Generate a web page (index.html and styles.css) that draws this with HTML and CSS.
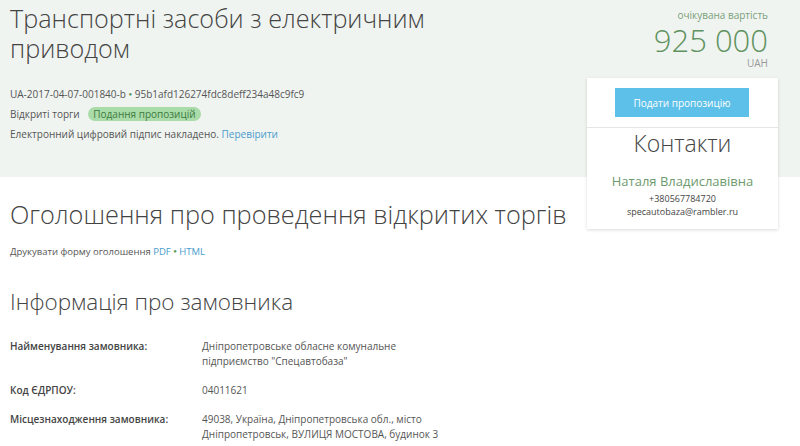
FILE: index.html
```html
<!DOCTYPE html>
<html lang="uk">
<head>
    <meta charset="UTF-8">
    <meta name="viewport" content="width=device-width, initial-scale=1.0">
    <title>Транспортні засоби з електричним приводом</title>
    <link rel="stylesheet" href="styles.css">
</head>
<body>
    <div class="hero">
        <div class="hero-main">
            <h1 class="tender-title">Транспортні засоби з електричним приводом</h1>
            <div class="tender-meta">
                <div class="meta-line">UA-2017-04-07-001840-b <span class="dot">●</span> 95b1afd126274fdc8deff234a48c9fc9</div>
                <div class="meta-line">Відкриті торги <span class="status">Подання пропозицій</span></div>
                <div class="meta-line">Електронний цифровий підпис накладено. <a href="#">Перевірити</a></div>
            </div>
        </div>
        <div class="hero-side">
            <div class="price">
                <div class="price-label">очікувана вартість</div>
                <div class="price-value">925 000</div>
                <div class="price-currency">UAH</div>
            </div>
            <div class="contact-card">
                <div class="card-action">
                    <button class="bid-button">Подати пропозицію</button>
                </div>
                <div class="card-contacts">
                    <div class="contacts-title">Контакти</div>
                    <div class="contact-name">Наталя Владиславівна</div>
                    <div class="contact-line contact-phone">+380567784720</div>
                    <div class="contact-line">specautobaza@rambler.ru</div>
                </div>
            </div>
        </div>
    </div>

    <div class="content">
        <h2 class="section-title">Оголошення про проведення відкритих торгів</h2>
        <div class="print-line">Друкувати форму оголошення <a href="#">PDF</a> <span class="dot">●</span> <a href="#">HTML</a></div>

        <h3 class="block-title">Інформація про замовника</h3>
        <div class="info-table">
            <div class="info-label">Найменування замовника:</div>
            <div class="info-value">Дніпропетровське обласне комунальне<br>підприємство "Спецавтобаза"</div>
            <div class="info-label">Код ЄДРПОУ:</div>
            <div class="info-value">04011621</div>
            <div class="info-label">Місцезнаходження замовника:</div>
            <div class="info-value">49038, Україна, Дніпропетровська обл., місто<br>Дніпропетровськ, ВУЛИЦЯ МОСТОВА, будинок 3</div>
        </div>
    </div>
</body>
</html>
```

FILE: styles.css
```css
body {
    font-family: "Open Sans", "Liberation Sans", sans-serif;
    margin: 0;
    padding: 0;
    color: #555;
    background: #fff;
    overflow: hidden;
}

a {
    color: #4a9ccc;
    text-decoration: none;
}

.dot {
    color: #5a9a5a;
    font-size: 6px;
    vertical-align: 2px;
}

.hero {
    display: flex;
    height: 177px;
    padding: 0 22px 0 10px;
    background: #f0f4f1;
}

.hero-main {
    flex: 1;
}

.tender-title {
    margin: 0;
    padding-top: 3px;
    max-width: 540px;
    font-size: 25.2px;
    font-weight: 300;
    line-height: 30px;
    color: #444;
}

.tender-meta {
    margin-top: 21px;
    font-size: 10px;
    line-height: 20px;
    color: #555;
}

.status {
    display: inline-block;
    margin-left: 6px;
    padding: 0 5px;
    line-height: 14px;
    border-radius: 8px;
    background: #a9dca9;
    color: #3d7a3d;
}

.hero-side {
    width: 191px;
    display: flex;
    flex-direction: column;
}

.price {
    padding: 8px 10px 0 0;
    text-align: right;
}

.price-label {
    font-size: 10px;
    line-height: 14px;
    color: #7a9f7a;
}

.price-value {
    margin-top: 4px;
    font-size: 31px;
    font-weight: 300;
    line-height: 28px;
    color: #5f925f;
}

.price-currency {
    margin-top: 3px;
    font-size: 10px;
    line-height: 12px;
    color: #999;
}

.contact-card {
    position: relative;
    margin-top: 9px;
    background: #fff;
    box-shadow: 0 1px 3px rgba(0, 0, 0, 0.15);
}

.card-action {
    padding: 10px 29px 10px 28px;
    border-bottom: 1px solid #e6e6e6;
}

.bid-button {
    display: block;
    width: 100%;
    height: 29px;
    border: none;
    background: #5cc0e8;
    color: #fff;
    font-family: inherit;
    font-size: 10px;
    cursor: pointer;
}

.card-contacts {
    padding: 1px 0 11px;
    text-align: center;
}

.contacts-title {
    font-size: 23px;
    font-weight: 300;
    line-height: 28px;
    color: #444;
}

.contact-name {
    margin-top: 15px;
    font-size: 13px;
    line-height: 18px;
    color: #6d9a6d;
}

.contact-phone {
    margin-top: 2px;
}

.contact-line {
    font-size: 9px;
    line-height: 13px;
    color: #444;
}

.content {
    padding: 0 10px;
}

.section-title {
    margin: 20px 0 0;
    font-size: 25.3px;
    font-weight: 300;
    line-height: 34px;
    color: #444;
}

.print-line {
    margin-top: 13px;
    font-size: 9.5px;
    line-height: 14px;
}

.block-title {
    margin: 28px 0 0;
    font-size: 22.5px;
    font-weight: 300;
    line-height: 30px;
    color: #444;
}

.info-table {
    display: grid;
    grid-template-columns: 192px 1fr;
    row-gap: 14px;
    margin-top: 22px;
    font-size: 10px;
    line-height: 15px;
}

.info-label {
    font-weight: 600;
    color: #444;
}

.info-value {
    color: #555;
}
```
